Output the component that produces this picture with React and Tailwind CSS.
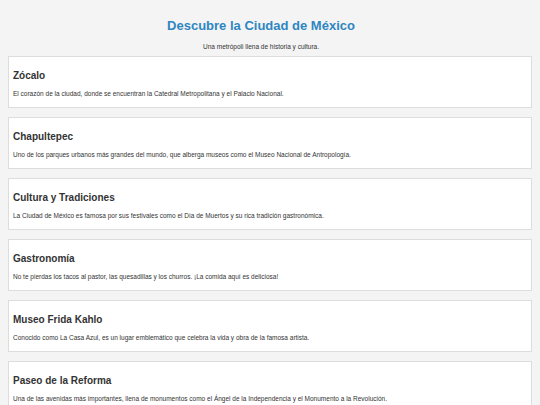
export default function App() {
  const places = [
    { t: "Zócalo", d: "El corazón de la ciudad, donde se encuentran la Catedral Metropolitana y el Palacio Nacional." },
    { t: "Chapultepec", d: "Uno de los parques urbanos más grandes del mundo, que alberga museos como el Museo Nacional de Antropología." },
    { t: "Cultura y Tradiciones", d: "La Ciudad de México es famosa por sus festivales como el Día de Muertos y su rica tradición gastronómica." },
    { t: "Gastronomía", d: "No te pierdas los tacos al pastor, las quesadillas y los churros. ¡La comida aquí es deliciosa!" },
    { t: "Museo Frida Kahlo", d: "Conocido como La Casa Azul, es un lugar emblemático que celebra la vida y obra de la famosa artista." },
    { t: "Paseo de la Reforma", d: "Una de las avenidas más importantes, llena de monumentos como el Ángel de la Independencia y el Monumento a la Revolución." },
  ];
  return (
    <div className="min-h-[405px] bg-[#f4f4f4] text-[#333] px-2 pt-[18px] pb-4" style={{ fontFamily: '"Liberation Sans", Arial, sans-serif' }}>
      <header className="text-center pr-[18px]">
        <h1 className="text-[13px] leading-[15px] font-bold text-[#2e86c1]">Descubre la Ciudad de México</h1>
        <p className="text-[6.5px] leading-[8px] mt-[10px]">Una metrópoli llena de historia y cultura.</p>
      </header>
      <div className="mt-[5px] flex flex-col gap-[9px]">
        {places.map((p) => (
          <section key={p.t} className="bg-white border border-[#ddd] px-[4px] pt-[13px] pb-[9px]">
            <h2 className="text-[10px] leading-[12px] font-bold">{p.t}</h2>
            <p className="text-[6.5px] leading-[8px] mt-[8px]">{p.d}</p>
          </section>
        ))}
      </div>
    </div>
  );
}
